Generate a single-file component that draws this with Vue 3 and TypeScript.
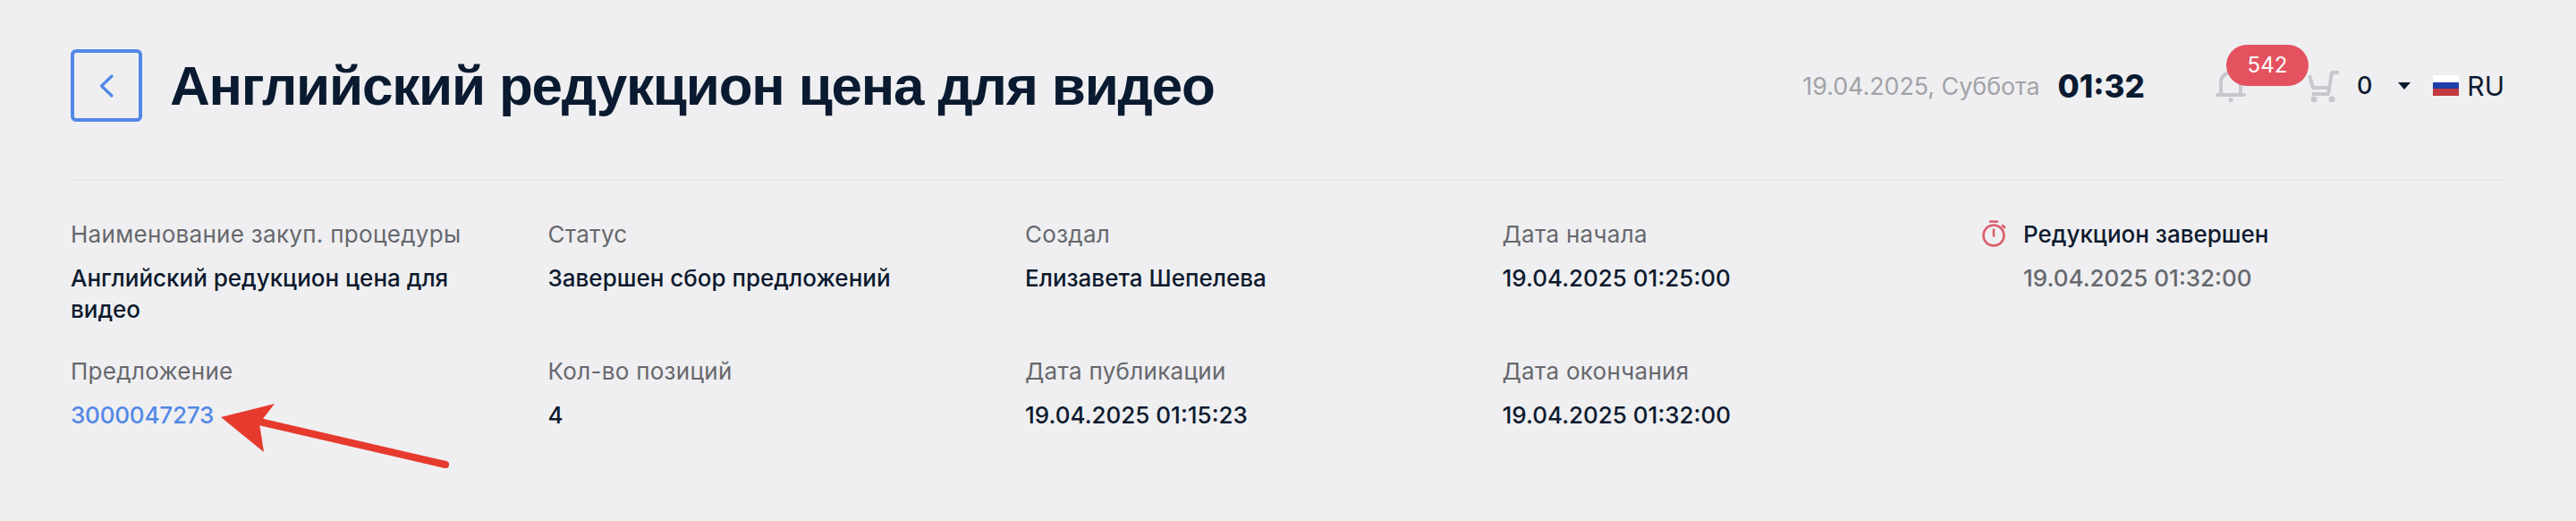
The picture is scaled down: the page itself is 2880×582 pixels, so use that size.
<script setup lang="ts">
interface Field { label: string; value: string; link?: boolean }
const fields: Field[] = [
  { label: 'Наименование закуп. процедуры', value: 'Английский редукцион цена для видео' },
  { label: 'Статус', value: 'Завершен сбор предложений' },
  { label: 'Создал', value: 'Елизавета Шепелева' },
  { label: 'Дата начала', value: '19.04.2025 01:25:00' },
]
const fields2: Field[] = [
  { label: 'Предложение', value: '3000047273', link: true },
  { label: 'Кол-во позиций', value: '4' },
  { label: 'Дата публикации', value: '19.04.2025 01:15:23' },
  { label: 'Дата окончания', value: '19.04.2025 01:32:00' },
]
</script>

<template>
  <div class="page">
    <header class="head">
      <button class="back" type="button" aria-label="Назад">
        <svg width="18" height="28" viewBox="0 0 18 28" fill="none"><path d="M15 3 3.500 14 15 25" stroke="#5288e6" stroke-width="3.200" stroke-linecap="round" stroke-linejoin="round"/></svg>
      </button>
      <h1 class="title">Английский редукцион цена для видео</h1>
      <div class="tools">
        <span class="date">19.04.2025, Суббота</span>
        <span class="time">01:32</span>
        <span class="bell">
          <svg width="36" height="36" viewBox="0 0 36 36" fill="none">
            <path d="M7 27V14a11 11 0 0 1 22 0v13" stroke="#c6c8cc" stroke-width="4"/>
            <path d="M3 28h30" stroke="#c6c8cc" stroke-width="4" stroke-linecap="round"/>
            <circle cx="18" cy="33.500" r="2.500" fill="#c6c8cc"/>
          </svg>
          <span class="badge">542</span>
        </span>
        <svg class="cart" width="36" height="36" viewBox="0 0 36 36" fill="none">
          <path d="M35 3H27L23 27H5" stroke="#c6c8cc" stroke-width="4" stroke-linejoin="round"/>
          <path d="M2 6l4 14h19" stroke="#c6c8cc" stroke-width="4" stroke-linejoin="round"/>
          <circle cx="7" cy="33" r="3.500" fill="#c6c8cc"/><circle cx="27" cy="33" r="3.500" fill="#c6c8cc"/>
        </svg>
        <span class="count">0</span>
        <span class="caret"></span>
        <span class="lang">
          <span class="flag"><i class="w"></i><i class="b"></i><i class="r"></i></span>
          RU
        </span>
      </div>
    </header>

    <section class="grid">
      <div v-for="f in fields" :key="f.label" class="cell">
        <div class="label">{{ f.label }}</div>
        <div class="value">{{ f.value }}</div>
      </div>
      <div class="cell finish">
        <svg class="timer" width="28" height="32" viewBox="0 0 28 32" fill="none">
          <circle cx="14" cy="18" r="11.500" stroke="#db5f6b" stroke-width="2.600"/>
          <path d="M10 2.500h8M14 11.500v7M24 7l2 2" stroke="#db5f6b" stroke-width="2.600" stroke-linecap="round"/>
        </svg>
        <div>
          <div class="value">Редукцион завершен</div>
          <div class="sub">19.04.2025 01:32:00</div>
        </div>
      </div>
      <div v-for="f in fields2" :key="f.label" class="cell">
        <div class="label">{{ f.label }}</div>
        <div class="value" :class="{ link: f.link }">{{ f.value }}</div>
      </div>
    </section>

    <svg class="arrow" width="270" height="80" viewBox="0 0 270 80" fill="none">
      <path d="M251 68 43 20" stroke="#e63a2e" stroke-width="8" stroke-linecap="round"/>
      <path d="M0 15 60 0 43 22 48 54Z" fill="#e63a2e"/>
    </svg>
  </div>
</template>

<style>
html, body { margin: 0; background: #efeff1; }
</style>

<style scoped>
.page {
  position: relative;
  box-sizing: border-box;
  height: 582px;
  padding: 55px 80px 0 79px;
  background: #efeff1;
  font-family: Inter, "Noto Sans", sans-serif;
  color: #0d1a2e;
}
.head {
  display: flex;
  align-items: center;
  height: 147px;
  box-sizing: border-box;
  padding-bottom: 64px;
  border-bottom: 2px solid #e9e9eb;
}
.back {
  flex: none;
  display: flex;
  align-items: center;
  justify-content: center;
  box-sizing: border-box;
  width: 80px;
  height: 81px;
  padding: 0;
  border: 4px solid #5288e6;
  border-radius: 6px;
  background: transparent;
}
.title {
  margin: 0 0 0 31px;
  font-family: "Liberation Sans", Arial, sans-serif;
  font-size: 62px;
  font-weight: 700;
  line-height: 70px;
  letter-spacing: -1.2px;
  color: #0a1a30;
  white-space: nowrap;
}
.tools {
  margin-left: auto;
  display: flex;
  align-items: center;
}
.date { font-size: 26.800px; color: #a1a3a7; }
.time { margin-left: 20px; font-size: 35px; font-weight: 800; color: #0a1a30; }
.bell { position: relative; display: flex; margin-left: 78px; }
.badge {
  position: absolute;
  left: 13px;
  top: -28px;
  width: 92px;
  height: 46px;
  border-radius: 23px;
  background: #e5525f;
  color: #fff;
  font-size: 24px;
  line-height: 46px;
  text-align: center;
}
.cart { margin-left: 68px; }
.count { margin-left: 19px; font-size: 27px; font-weight: 500; }
.caret {
  margin-left: 29px;
  border: 7px solid transparent;
  border-top: 8px solid #0a1a30;
  border-bottom: 0;
}
.lang { display: flex; align-items: center; margin-left: 25px; font-size: 30px; gap: 9px; }
.flag { display: flex; flex-direction: column; width: 29px; }
.flag i { height: 7.400px; display: block; }
.flag .w { background: #fff; }
.flag .b { background: #1f3fa8; }
.flag .r { background: #c23a3f; }
.grid {
  display: grid;
  grid-template-columns: repeat(5, 533.500px);
  grid-template-rows: 153px auto;
  padding-top: 42px;
}
.cell { padding-right: 70px; font-size: 26px; line-height: 35px; }
.label { color: #66686d; margin-bottom: 14px; white-space: nowrap; letter-spacing: 0.3px; }
.value { font-weight: 500; color: #0d1a2e; }
.link { color: #5288e6; letter-spacing: -0.2px; }
.sub { color: #66686d; margin-top: 14px; font-weight: 500; }
.finish { display: flex; gap: 19px; padding: 0 0 0 2px; }
.timer { flex: none; margin-top: 1px; }
.arrow { position: absolute; left: 247px; top: 451px; }
</style>
